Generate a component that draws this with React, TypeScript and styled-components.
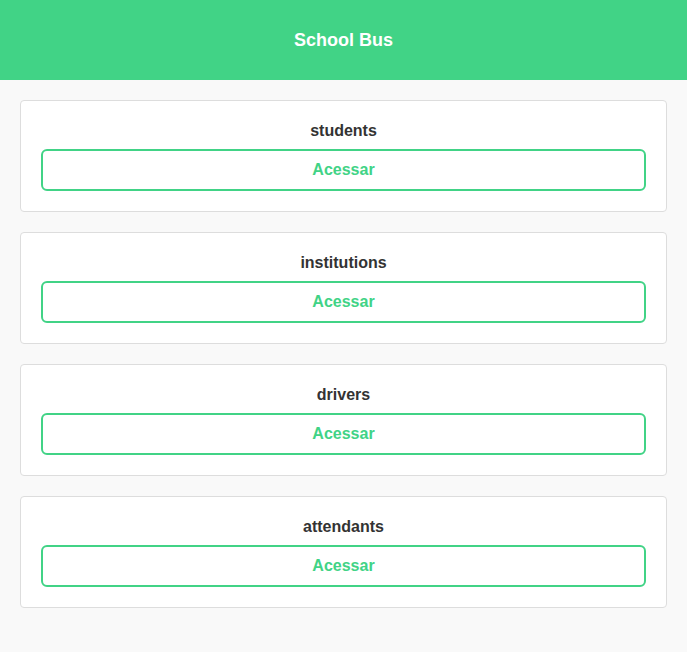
import React from "react";
import styled, { createGlobalStyle } from "styled-components";

const green = "#41d386";

const GlobalStyle = createGlobalStyle`
  body {
    margin: 0;
    background: #f9f9f9;
    font-family: "Liberation Sans", Arial, sans-serif;
  }
`;

const Header = styled.header`
  height: 80px;
  background: ${green};
  display: flex;
  align-items: center;
  justify-content: center;
  color: #fff;
  font-size: 18px;
  font-weight: bold;
`;

const List = styled.main`
  display: flex;
  flex-direction: column;
  gap: 20px;
  padding: 20px;
`;

const Card = styled.div`
  background: #fff;
  border: 1px solid #ddd;
  border-radius: 4px;
  padding: 20px;
  display: flex;
  flex-direction: column;
  align-items: stretch;
`;

const Title = styled.h3`
  margin: 0 0 9px;
  font-size: 16px;
  line-height: 19px;
  font-weight: bold;
  color: #333;
  text-align: center;
`;

const Button = styled.button`
  background: #fff;
  border: 2px solid ${green};
  border-radius: 6px;
  padding: 10px;
  font-family: inherit;
  font-size: 16px;
  line-height: 18px;
  font-weight: bold;
  color: ${green};
  cursor: pointer;
`;

const sections = ["students", "institutions", "drivers", "attendants"];

const App: React.FC = () => {
  return (
    <>
      <GlobalStyle />
      <Header>School Bus</Header>
      <List>
        {sections.map((name) => (
          <Card key={name}>
            <Title>{name}</Title>
            <Button>Acessar</Button>
          </Card>
        ))}
      </List>
    </>
  );
};

export default App;
